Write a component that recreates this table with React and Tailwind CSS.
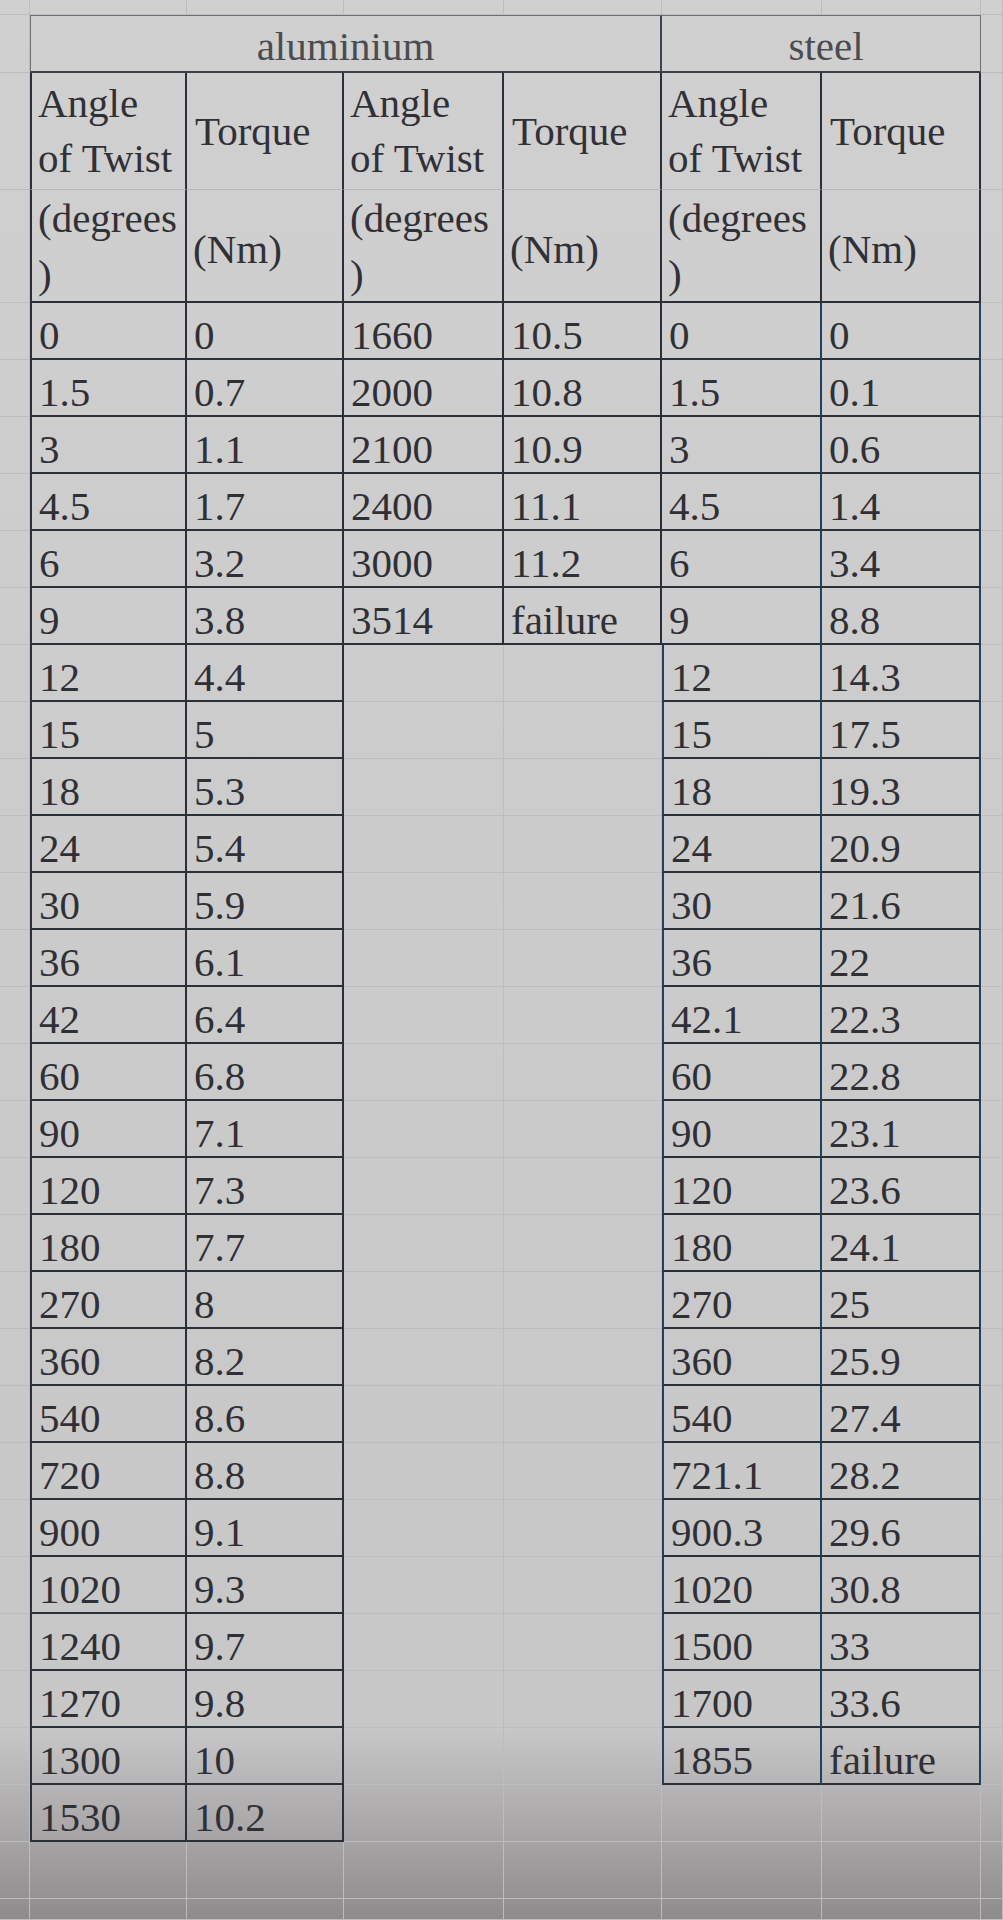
import React from "react";

const ALU = [
  ["0", "0"], ["1.5", "0.7"], ["3", "1.1"], ["4.5", "1.7"], ["6", "3.2"], ["9", "3.8"],
  ["12", "4.4"], ["15", "5"], ["18", "5.3"], ["24", "5.4"], ["30", "5.9"], ["36", "6.1"],
  ["42", "6.4"], ["60", "6.8"], ["90", "7.1"], ["120", "7.3"], ["180", "7.7"], ["270", "8"],
  ["360", "8.2"], ["540", "8.6"], ["720", "8.8"], ["900", "9.1"], ["1020", "9.3"],
  ["1240", "9.7"], ["1270", "9.8"], ["1300", "10"], ["1530", "10.2"],
];

const ALU2 = [
  ["1660", "10.5"], ["2000", "10.8"], ["2100", "10.9"], ["2400", "11.1"], ["3000", "11.2"], ["3514", "failure"],
];

const STEEL = [
  ["0", "0"], ["1.5", "0.1"], ["3", "0.6"], ["4.5", "1.4"], ["6", "3.4"], ["9", "8.8"],
  ["12", "14.3"], ["15", "17.5"], ["18", "19.3"], ["24", "20.9"], ["30", "21.6"], ["36", "22"],
  ["42.1", "22.3"], ["60", "22.8"], ["90", "23.1"], ["120", "23.6"], ["180", "24.1"], ["270", "25"],
  ["360", "25.9"], ["540", "27.4"], ["721.1", "28.2"], ["900.3", "29.6"], ["1020", "30.8"],
  ["1500", "33"], ["1700", "33.6"], ["1855", "failure"],
];

const DATA_ROWS = 27;

// value for data row i, column c (1..6), or null when the sheet cell is empty
function cellValue(i, c) {
  if (c === 1 || c === 2) return ALU[i] ? ALU[i][c - 1] : null;
  if (c === 3 || c === 4) return ALU2[i] ? ALU2[i][c - 3] : null;
  if (c === 5 || c === 6) return STEEL[i] ? STEEL[i][c - 5] : null;
  return null;
}

function Empty() {
  return <div className="border-r border-b border-[#bdbcbe]" />;
}

function DataCell({ value, left, steel }) {
  return (
    <div
      className={`flex items-end pl-[7px] pb-[2px] border-r-2 border-b-2 border-b-[#2b3038] whitespace-nowrap leading-none text-[41px] text-[#2f3035] ${
        steel ? "border-r-[#23405c]" : "border-r-[#2a3039]"
      } ${left ? (steel ? "border-l-2 border-l-[#23405c]" : "border-l-2 border-l-[#2a3039]") : ""}`}
    >
      {value}
    </div>
  );
}

function HeadTop({ angle, left }) {
  return (
    <div
      className={`flex flex-col justify-center pl-[6px] border-r-2 border-r-[#2a3039] border-b border-b-[#b6b5b7] leading-[55px] text-[41px] text-[#303136] whitespace-nowrap ${
        left ? "border-l-2 border-l-[#2a3039]" : ""
      }`}
    >
      {angle ? (
        <>
          <span>Angle</span>
          <span>of Twist</span>
        </>
      ) : (
        <span className="pl-[2px]">Torque</span>
      )}
    </div>
  );
}

function HeadBottom({ angle, left }) {
  return (
    <div
      className={`flex flex-col pl-[6px] border-r-2 border-r-[#2a3039] border-b-2 border-b-[#2b3038] text-[41px] text-[#303136] whitespace-nowrap ${
        left ? "border-l-2 border-l-[#2a3039]" : ""
      } ${angle ? "justify-start leading-[56px]" : "justify-center leading-[55px] pt-[8px]"}`}
    >
      {angle ? (
        <>
          <span>(degrees</span>
          <span>)</span>
        </>
      ) : (
        <span>(Nm)</span>
      )}
    </div>
  );
}

export default function App() {
  const cells = [];

  // top strip
  for (let c = 0; c < 8; c++) cells.push(<Empty key={`t-${c}`} />);

  // merged group header
  cells.push(<Empty key="g-0" />);
  cells.push(
    <div
      key="g-alu"
      className="col-span-4 flex items-end justify-center pb-[4px] border-t border-l border-r-2 border-[#6b6f76] border-r-[#3a4553] border-b-2 border-b-[#3a3f47] leading-none text-[41px] text-[#4b4c51]"
    >
      aluminium
    </div>
  );
  cells.push(
    <div
      key="g-steel"
      className="col-span-2 flex items-end justify-center pb-[4px] pl-[10px] border-t border-r border-[#6b6f76] border-b-2 border-b-[#3a3f47] leading-none text-[41px] text-[#4b4c51]"
    >
      steel
    </div>
  );
  cells.push(<Empty key="g-7" />);

  // column headers (two sheet rows)
  cells.push(<Empty key="h1-0" />);
  for (let c = 1; c <= 6; c++) cells.push(<HeadTop key={`h1-${c}`} angle={c % 2 === 1} left={c === 1} />);
  cells.push(<Empty key="h1-7" />);

  cells.push(<Empty key="h2-0" />);
  for (let c = 1; c <= 6; c++) cells.push(<HeadBottom key={`h2-${c}`} angle={c % 2 === 1} left={c === 1} />);
  cells.push(<Empty key="h2-7" />);

  // data rows
  for (let i = 0; i < DATA_ROWS; i++) {
    cells.push(<Empty key={`d${i}-0`} />);
    for (let c = 1; c <= 6; c++) {
      const v = cellValue(i, c);
      if (v === null) {
        cells.push(<Empty key={`d${i}-${c}`} />);
      } else {
        const left = c === 1 || (c === 5 && cellValue(i, 4) === null);
        cells.push(<DataCell key={`d${i}-${c}`} value={v} left={left} steel={c >= 5} />);
      }
    }
    cells.push(<Empty key={`d${i}-7`} />);
  }

  // trailing empty sheet rows
  for (let r = 0; r < 2; r++) {
    for (let c = 0; c < 8; c++) cells.push(<Empty key={`e${r}-${c}`} />);
  }

  return (
    <div className="w-[1003px] h-[1920px] overflow-hidden bg-linear-to-b from-[#d1d0d1] via-[#c8c7c8] via-90% to-[#8e8b8d] font-['Liberation_Serif',serif]">
      <div className="grid h-full grid-cols-[30px_157px_157px_160px_158px_160px_159px_1fr] grid-rows-[15px_58px_117px_113px_repeat(27,57px)_57px_1fr]">
        {cells}
      </div>
    </div>
  );
}
